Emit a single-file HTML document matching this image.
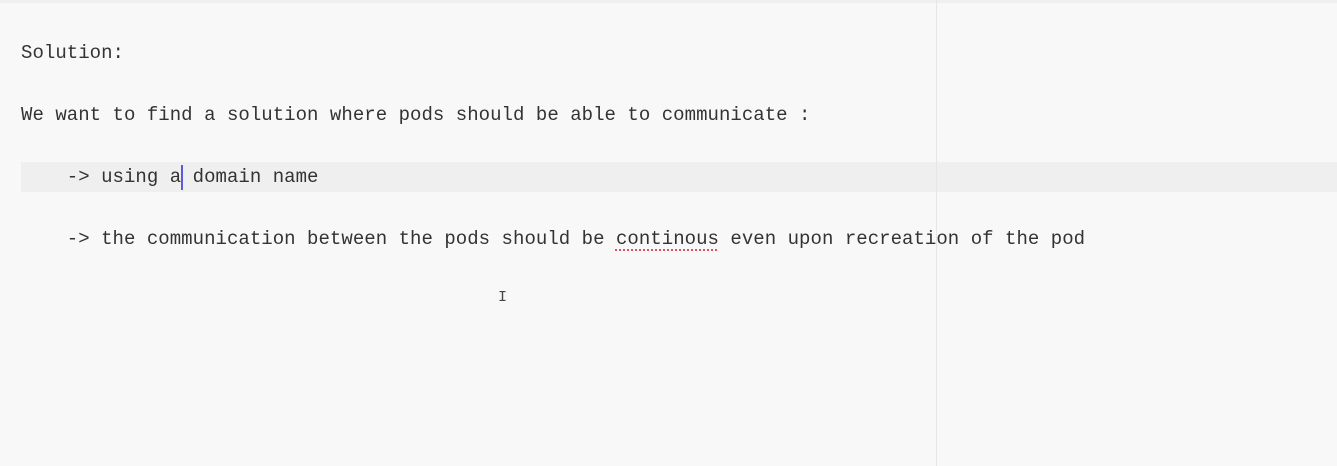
<!DOCTYPE html>
<html><head><style>
html,body{margin:0;padding:0;background:#f8f8f8;width:1337px;height:466px;overflow:hidden;position:relative}
.t{position:absolute;left:21px;font-family:"Liberation Mono",monospace;font-size:19px;color:#333;white-space:pre;line-height:24px;letter-spacing:0.04px}
.hl{position:absolute;left:21px;right:0;top:162px;height:30px;background:#efefef}
.vl{position:absolute;left:936px;top:0;width:1px;height:466px;background:#e6e6e6}
.top{position:absolute;left:0;right:0;top:0;height:3px;background:#efefef}
.cur{position:absolute;left:181px;top:165px;width:2px;height:25px;background:#5a5ae0}
.sq{text-decoration:underline dotted #e05060;text-underline-offset:5px;text-decoration-thickness:2px}
.ib{position:absolute;left:498px;top:289px;font-family:"Liberation Mono",monospace;font-size:15px;color:#444}
</style></head><body>
<div class="top"></div>
<div class="hl"></div>
<div class="vl"></div>
<div class="t" style="top:41px">Solution:</div>
<div class="t" style="top:103px">We want to find a solution where pods should be able to communicate :</div>
<div class="t" style="top:165px">    -&gt; using a domain name</div>
<div class="cur"></div>
<div class="t" style="top:227px">    -&gt; the communication between the pods should be <span class="sq">continous</span> even upon recreation of the pod</div>
<div class="ib">I</div>
</body></html>
